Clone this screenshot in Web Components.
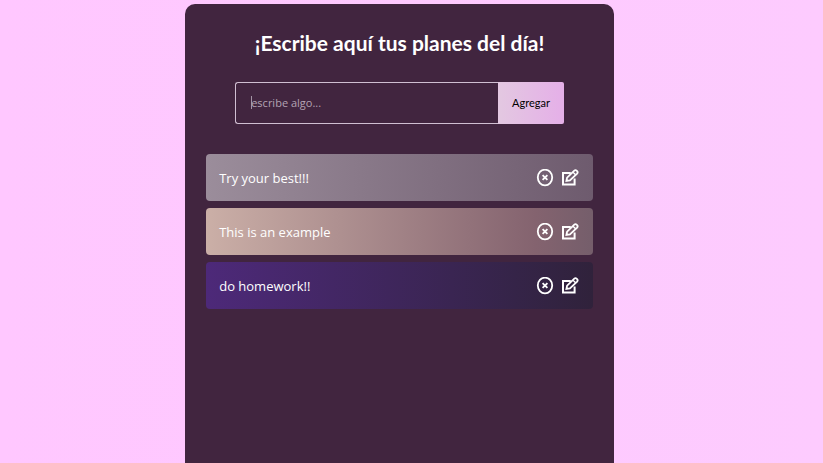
<!DOCTYPE html>
<html lang="es">
<head>
<meta charset="utf-8">
<meta name="viewport" content="width=device-width, initial-scale=1">
<title>Planes del día</title>
<style>
  body {
    margin: 0;
    min-height: 100vh;
    display: flex;
    background: linear-gradient(to right, #ffc7ff, #fdcbfe);
    color: #fff;
    font-family: "Trebuchet MS", "Open Sans", "Noto Sans", sans-serif;
  }
</style>
</head>
<body>
<planner-app>
  <planner-form></planner-form>
  <plan-item style="--from:#9b8d9b; --to:#6e5b6e">Try your best!!!</plan-item>
  <plan-item style="--from:#cbafa7; --mid:#84636f 85%; --to:#755e6b">This is an example</plan-item>
  <plan-item style="--from:#4d2979; --mid:#352448 80%; --to:#30223b">do homework!!</plan-item>
</planner-app>

<script>
class PlannerApp extends HTMLElement {
  constructor() {
    super();
    this.attachShadow({ mode: "open" }).innerHTML = `
      <style>
        :host {
          display: block;
          box-sizing: border-box;
          width: 52.1%;
          margin: 4px 0 0 22.5%;
          padding: 24px 21px;
          border-radius: 10px 10px 0 0;
          background: #41253f;
        }
        h1 {
          margin: 0 0 24px;
          font-family: "Trebuchet MS", Lato, "Open Sans", sans-serif;
          font-size: 21px;
          line-height: 30px;
          font-weight: 700;
          text-align: center;
          white-space: nowrap;
        }
        main { display: flex; flex-direction: column; gap: 7px; }
      </style>
      <h1>¡Escribe aquí tus planes del día!</h1>
      <main><slot></slot></main>`;
  }
}

class PlannerForm extends HTMLElement {
  constructor() {
    super();
    this.attachShadow({ mode: "open" }).innerHTML = `
      <style>
        :host { display: block; width: 85%; margin: 0 auto 23px; }
        form { display: flex; height: 42px; }
        input, button { box-sizing: border-box; margin: 0; font-family: inherit; font-size: 11px; }
        input {
          flex: 1;
          min-width: 0;
          padding: 0 15px 2px;
          border: 1px solid #d0bfd2;
          border-right: 0;
          border-radius: 3px 0 0 3px;
          color: #fff;
          background: linear-gradient(#a394a4, #a394a4) left center / 1px 13px no-repeat content-box;
          outline: 0;
        }
        input::placeholder { color: #b3a3b3; opacity: 1; }
        button {
          width: 20%;
          padding: 0 0 2px;
          border: 0;
          border-radius: 0 2px 2px 0;
          color: #000;
          font-family: "Trebuchet MS", Lato, "Open Sans", sans-serif;
          background: linear-gradient(to right, #e3c8e1, #e5afe8);
        }
      </style>
      <form>
        <input type="text" placeholder="escribe algo..." aria-label="escribe algo">
        <button type="button">Agregar</button>
      </form>`;
  }
}

class PlanItem extends HTMLElement {
  constructor() {
    super();
    this.attachShadow({ mode: "open" }).innerHTML = `
      <style>
        :host {
          display: flex;
          align-items: center;
          gap: 7px;
          box-sizing: border-box;
          min-height: 47px;
          padding: 0 14px 0 13px;
          border-radius: 4px;
          background: linear-gradient(to right, var(--from), var(--mid, 50%), var(--to));
          font-size: 13px;
          line-height: 18px;
          font-weight: 600;
        }
        span { flex: 1; font-weight: 500; }
        button { display: flex; padding: 0; border: 0; background: none; color: #fff; }
        svg { display: block; width: 18px; height: 18px; fill: none; stroke: currentColor; stroke-width: 1.8; }
      </style>
      <span><slot></slot></span>
      <button type="button" aria-label="Eliminar">
        <svg viewBox="0 0 18 18"><ellipse cx="9" cy="8.5" rx="7.2" ry="7.8"/><path d="M6.6 6.1l4.8 4.8M11.4 6.1l-4.8 4.8"/></svg>
      </button>
      <button type="button" aria-label="Editar">
        <svg viewBox="0 0 18 18"><path d="M9.8 4H2v11.6h11.6V9.5" stroke-width="2"/><path d="M5.4 12l.7-3.4 7.2-7q1.2-1 2.6.3t.2 2.7l-7.2 6.8z"/><path d="M12 3.2l2.6 2.6" stroke-width="1.4"/></svg>
      </button>`;
  }
}

customElements.define("planner-app", PlannerApp);
customElements.define("planner-form", PlannerForm);
customElements.define("plan-item", PlanItem);
</script>
</body>
</html>
